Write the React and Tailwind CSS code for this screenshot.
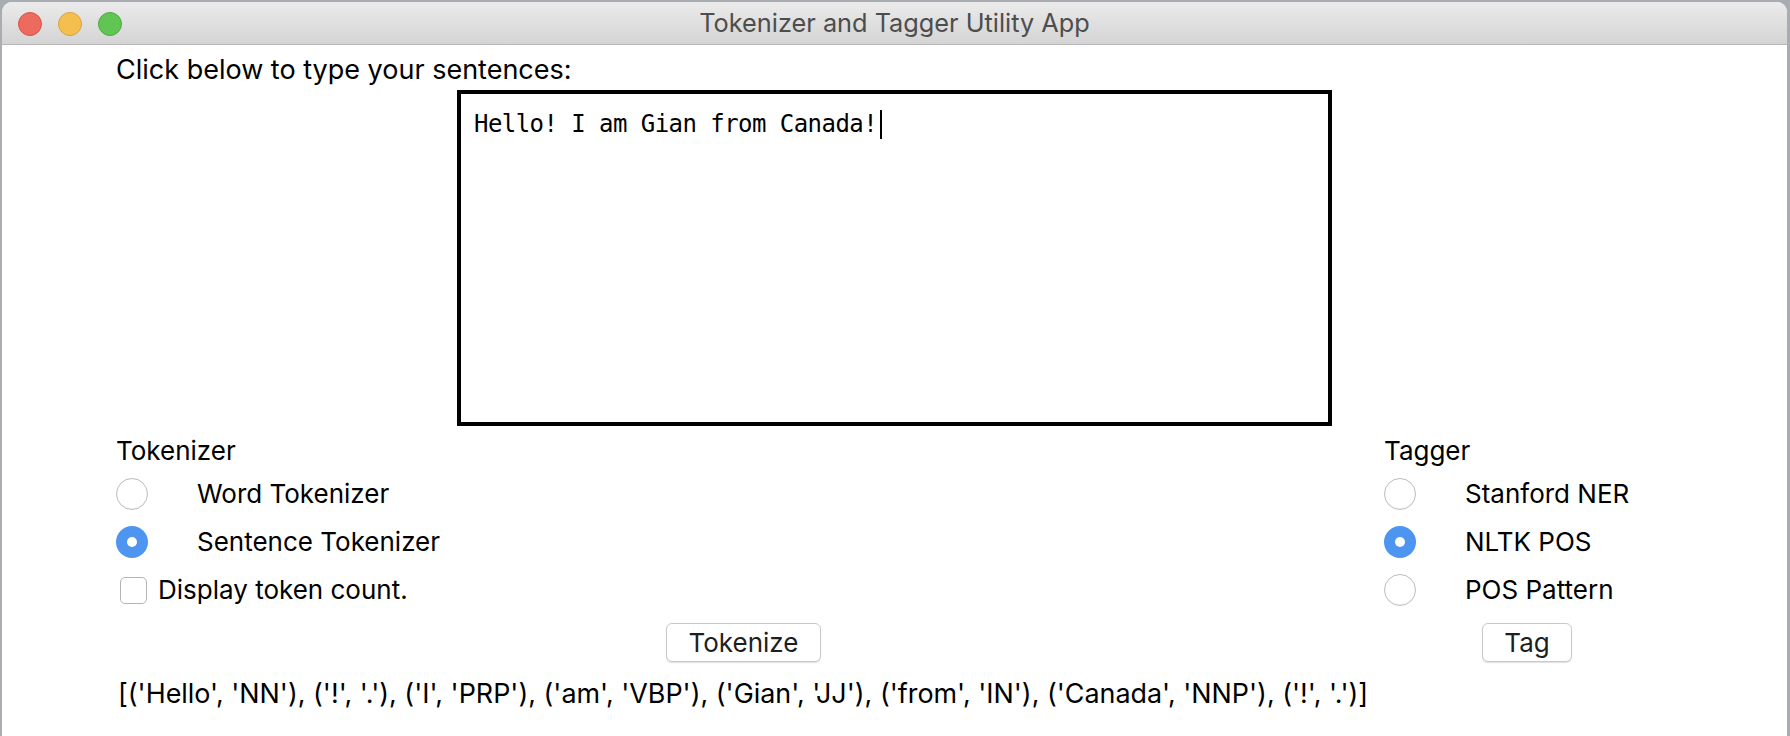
import React from "react";

const OUT = "[('Hello', 'NN'), ('!', '.'), ('I', 'PRP'), ('am', 'VBP'), ('Gian', 'JJ'), ('from', 'IN'), ('Canada', 'NNP'), ('!', '.')]";
const TITLE = "Tokenizer and Tagger Utility App";

function Radio({ on }) {
  if (on)
    return (
      <div className="w-[32px] h-[32px] rounded-full bg-[#4d95f1] flex items-center justify-center shrink-0">
        <div className="w-[10px] h-[10px] rounded-full bg-white" />
      </div>
    );
  return <div className="w-[32px] h-[32px] rounded-full border border-[#bcbcbc] bg-white shadow-[inset_0_-1px_1px_rgba(0,0,0,0.04)] shrink-0" />;
}

function RadioRow({ on, label }) {
  return (
    <div className="h-[48px] flex items-center">
      <Radio on={on} />
      <span className="ml-[49px]">{label}</span>
    </div>
  );
}

function Button({ children, w }) {
  return (
    <div
      className={`h-[39px] ${w} rounded-[6px] border border-[#c9c9c9] bg-white shadow-[0_1px_1px_rgba(0,0,0,0.12)] flex items-center justify-center text-[26px] text-[#1e1e1e]`}
    >
      {children}
    </div>
  );
}

export default function App() {
  return (
    <div className="w-[1790px] h-[736px] bg-[#a9adb2] overflow-hidden relative font-['Inter',sans-serif]">
      <div className="ml-[2px] mt-[2px] w-[1785px] h-[734px] bg-white rounded-t-[10px] overflow-hidden flex flex-col">
        <div className="h-[43px] shrink-0 bg-linear-to-b from-[#ebebeb] to-[#d4d4d4] border-b border-[#b8b8b8] relative flex items-center justify-center">
          <div className="absolute left-[16px] top-[10px] flex gap-[16px]">
            <div className="w-[24px] h-[24px] rounded-full bg-[#ed6a5e] border border-[#d5554a]" />
            <div className="w-[24px] h-[24px] rounded-full bg-[#f5bf4f] border border-[#d7a23f]" />
            <div className="w-[24px] h-[24px] rounded-full bg-[#61c554] border border-[#52a840]" />
          </div>
          <span className="text-[25.3px] text-[#4d4d4d]">{TITLE}</span>
        </div>

        <div className="text-[26px] leading-[30px] text-black flex flex-col">
          <div className="pl-[114px] mt-[10px] text-[27px]">Click below to type your sentences:</div>
          <div className="flex justify-center mt-[5px]">
            <div className="w-[875px] h-[336px] border-4 border-black bg-white pl-[13px] pt-[15px] font-['DejaVu_Sans_Mono',monospace] text-[24px] tracking-[-0.55px] leading-[30px] whitespace-pre">
              Hello! I am Gian from Canada!
              <span className="inline-block w-[2px] h-[29px] bg-black align-[-7px] ml-[3px]" />
            </div>
          </div>

          <div className="flex mt-[10px]">
            <div className="pl-[114px] flex flex-col">
              <div>Tokenizer</div>
              <div className="mt-[4px]">
                <RadioRow label="Word Tokenizer" />
                <RadioRow on label="Sentence Tokenizer" />
                <div className="h-[48px] flex items-center pl-[4px]">
                  <div className="w-[27px] h-[27px] rounded-[5px] border border-[#b4b4b4] bg-white shrink-0" />
                  <span className="ml-[11px]">Display token count.</span>
                </div>
              </div>
            </div>
            <div className="ml-auto w-[403px] flex flex-col">
              <div>Tagger</div>
              <div className="mt-[4px]">
                <RadioRow label="Stanford NER" />
                <RadioRow on label="NLTK POS" />
                <RadioRow label="POS Pattern" />
              </div>
            </div>
          </div>

          <div className="flex mt-[9px]">
            <div className="ml-[664px]">
              <Button w="w-[155px]">Tokenize</Button>
            </div>
            <div className="ml-[661px]">
              <Button w="w-[90px]">Tag</Button>
            </div>
          </div>

          <div className="pl-[116px] mt-[16px] text-[26.9px] whitespace-nowrap">{OUT}</div>
        </div>
      </div>
    </div>
  );
}
